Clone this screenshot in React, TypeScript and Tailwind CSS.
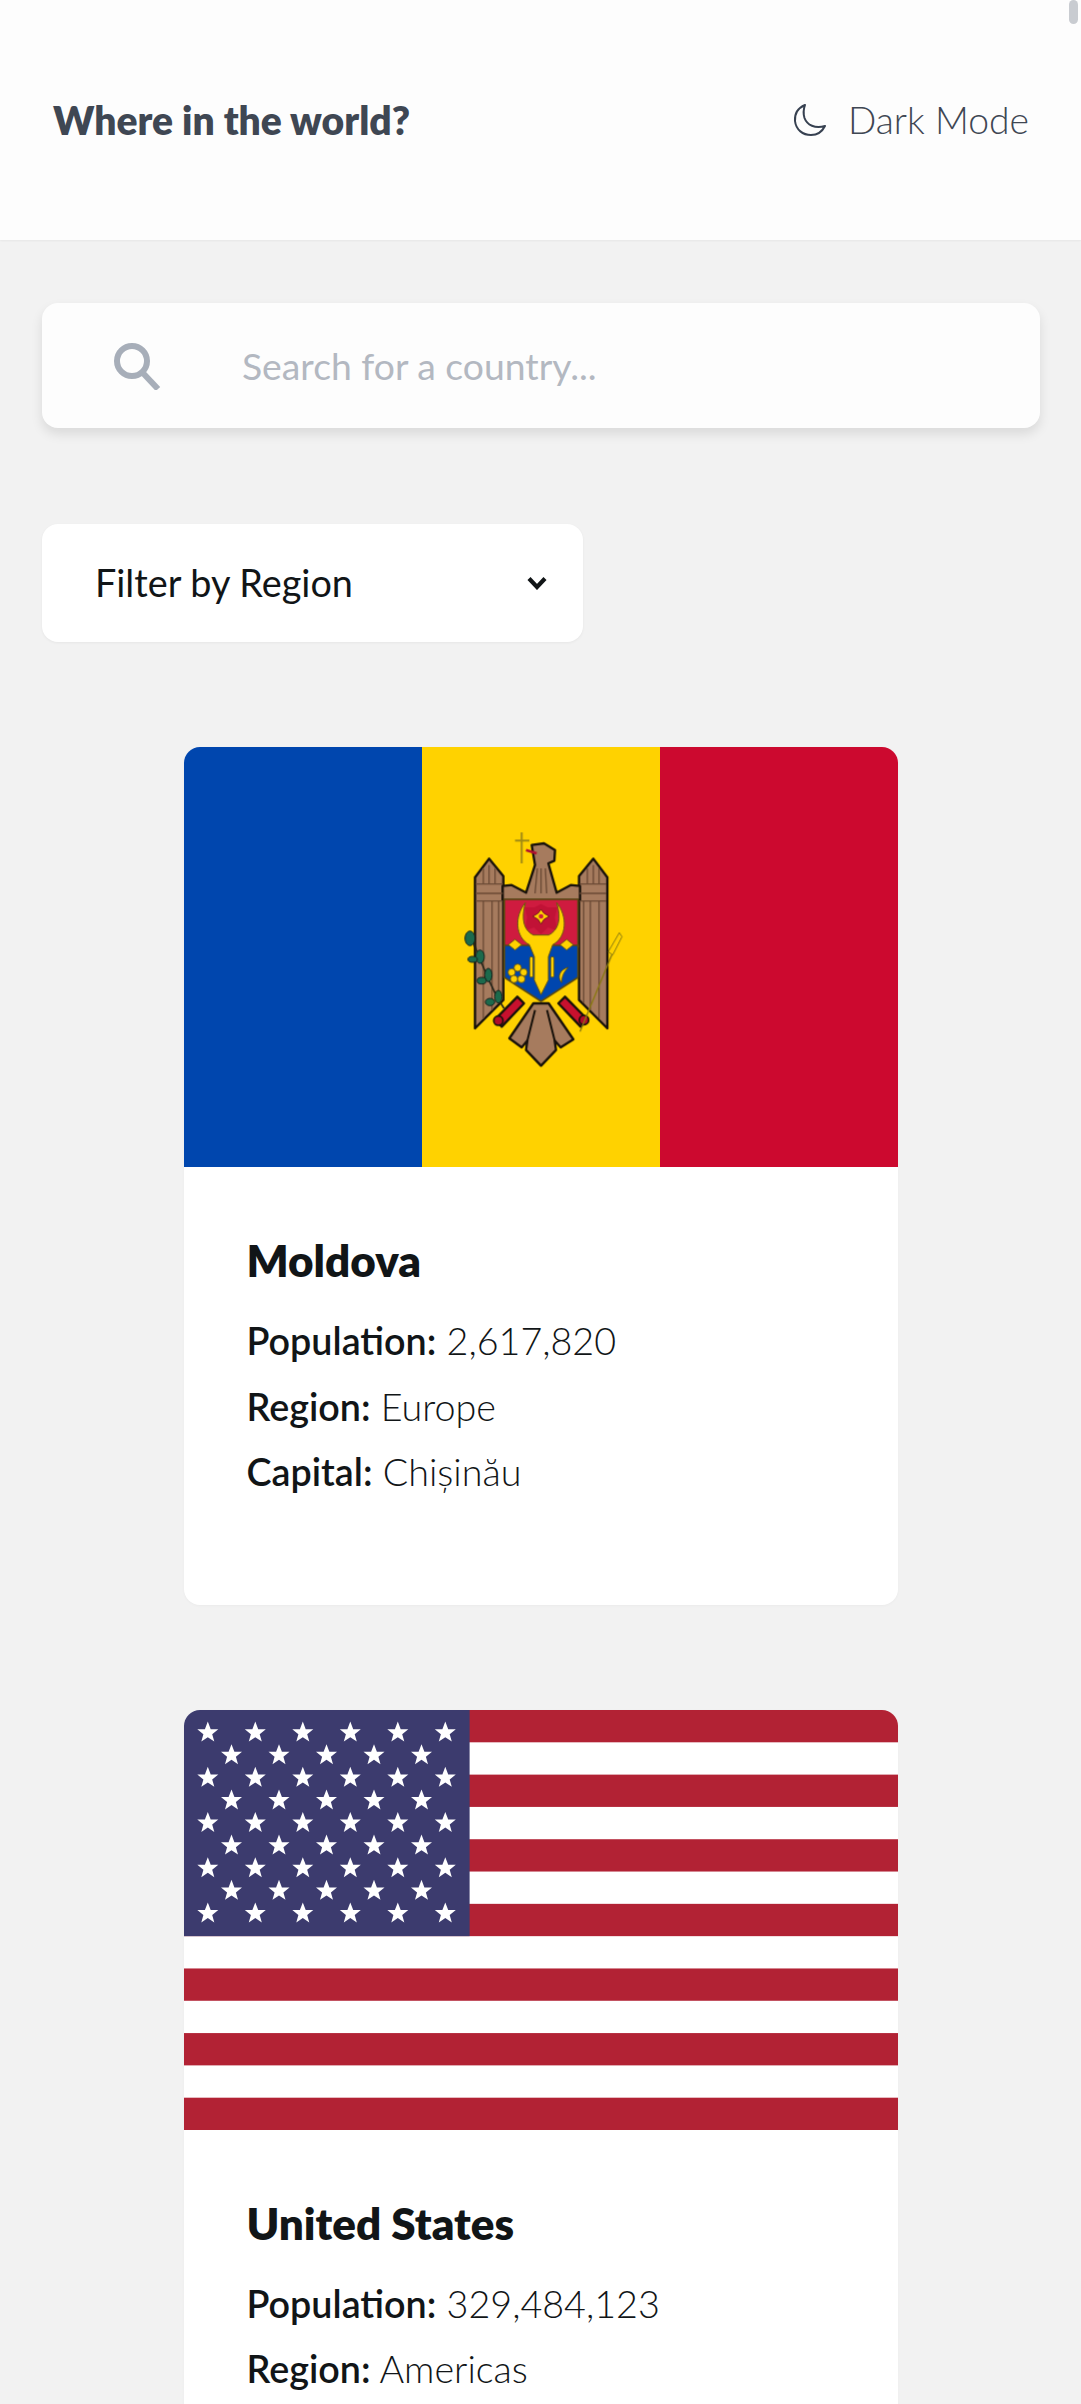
const font = "font-['Lato','Open_Sans',sans-serif]";

function Moon() {
  return (
    <svg viewBox="0 0 34 34" className="w-[34px] h-[34px]" fill="none" stroke="#374151" strokeWidth="2" strokeLinejoin="round">
      <path d="M12 2 C5 5 1.5 11 2 18 C3 27 10 32 18 32 C24 32 29 29 32 23 C22 26 14 22 11.5 15 C10 10 10.5 6 12 2 Z" />
    </svg>
  );
}

function SearchIcon() {
  return (
    <svg viewBox="0 0 48 48" className="w-[48px] h-[48px]" fill="none" stroke="#a7aeb9">
      <circle cx="19" cy="19" r="15" strokeWidth="6" />
      <path d="M29 30 L45 47" strokeWidth="6" />
    </svg>
  );
}

function Chevron() {
  return (
    <svg viewBox="0 0 20 14" className="w-[20px] h-[14px]" fill="none" stroke="#111517" strokeWidth="4.2">
      <path d="M2 2.5 L10 11 L18 2.5" />
    </svg>
  );
}

function MoldovaFlag() {
  const wing = "M165 685 L165 232 L207 176 L250 228 L250 300 L250 600 Z";
  const wingLines = "M190 305 L190 655 M216 305 L216 630 M236 305 L236 610 M168 252 L248 252 M168 280 L248 280 M168 303 L248 303 M190 205 L190 250 M207 195 L207 250 M225 205 L225 250";
  const tail = "M340 610 L268 715 L305 742 L322 722 L318 750 L363 797 L408 750 L404 722 L422 742 L460 718 L386 610 Z";
  return (
    <svg viewBox="0 0 714 420" className="block w-full h-[420px]" preserveAspectRatio="none">
      <rect width="238" height="420" fill="#0046AE" />
      <rect x="238" width="238" height="420" fill="#FFD200" />
      <rect x="476" width="238" height="420" fill="#CC092F" />
      <g transform="translate(236 53) scale(0.33333)" className="blur-[0.6px]">
        <g stroke="#17110a" strokeWidth="7" strokeLinejoin="round">
          <path d={wing} fill="#A67B5E" />
          <path d={wing} fill="#A67B5E" transform="translate(727 0) scale(-1 1)" />
          <path d="M248 258 L275 255 L318 278 L345 195 L335 135 L372 130 L405 150 L403 182 L385 190 L410 278 L452 255 L480 258 L480 300 L248 300 Z" fill="#A67B5E" />
          <path d={tail} fill="#A67B5E" />
          <path d="M225 658 L292 590 L312 610 L245 680 Z" fill="#C8102E" />
          <path d="M502 658 L435 590 L415 610 L482 680 Z" fill="#C8102E" />
        </g>
        <circle cx="235" cy="662" r="14" fill="#B00C2A" stroke="#17110a" strokeWidth="5" />
        <circle cx="492" cy="660" r="14" fill="#B00C2A" stroke="#17110a" strokeWidth="5" />
        <g stroke="#6b4a35" strokeWidth="4" fill="none">
          <path d={wingLines} />
          <path d={wingLines} transform="translate(727 0) scale(-1 1)" />
          <path d="M345 280 L352 205 M363 280 L363 205 M380 280 L376 205" />
        </g>
        <path d="M345 630 L322 722 M381 630 L404 722" stroke="#17110a" strokeWidth="6" fill="none" />
        <path d="M253 298 L474 298 L474 440 L253 440 Z" fill="#CF1B3F" stroke="#5a4a12" strokeWidth="5" />
        <path d="M253 436 L474 436 L474 532 L363 604 L253 532 Z" fill="#0046AE" stroke="#5a4a12" strokeWidth="5" />
        <path d="M363 312 L382 322 L412 322 L404 352 L412 392 L384 382 L363 402 L342 382 L314 392 L322 352 L314 322 L344 322 Z" fill="#C11236" />
        <path d="M363 328 L372 340 L388 349 L372 358 L363 372 L354 358 L338 349 L354 340 Z" fill="#FFD200" stroke="#7a1020" strokeWidth="3" />
        <circle cx="363" cy="349" r="7" fill="#CF1B3F" />
        <path d="M316 308 C282 350 286 412 328 434 L343 470 L343 540 L363 584 L385 540 L385 470 L398 434 C440 412 444 350 410 308 C426 358 414 392 386 405 L340 405 C312 392 302 358 316 308 Z" fill="#FFD200" stroke="#6a5510" strokeWidth="3" />
        <g fill="#FFD200" stroke="#5a4a12" strokeWidth="2.5">
          <circle cx="293" cy="503" r="11" />
          <circle cx="275" cy="517" r="11" />
          <circle cx="311" cy="517" r="11" />
          <circle cx="282" cy="537" r="11" />
          <circle cx="304" cy="537" r="11" />
          <path d="M285 418 L305 434 L285 450 L265 434 Z" />
          <path d="M440 418 L460 434 L440 450 L420 434 Z" />
          <path d="M445 502 C420 508 410 530 425 548 C425 528 432 515 445 502 Z" />
          <rect x="329" y="470" width="10" height="62" rx="5" />
          <rect x="392" y="470" width="10" height="62" rx="5" />
        </g>
        <path d="M252 625 C215 570 190 500 148 400" fill="none" stroke="#24241a" strokeWidth="5" />
        <g fill="#1c6a4c" stroke="#14201a" strokeWidth="3">
          <ellipse cx="150" cy="415" rx="15" ry="22" />
          <ellipse cx="180" cy="470" rx="13" ry="20" />
          <ellipse cx="158" cy="478" rx="14" ry="9" />
          <ellipse cx="205" cy="525" rx="11" ry="20" />
          <ellipse cx="185" cy="542" rx="14" ry="10" />
          <ellipse cx="235" cy="590" rx="11" ry="19" />
          <ellipse cx="210" cy="606" rx="14" ry="11" />
        </g>
        <path d="M480 695 L600 405" fill="none" stroke="#8a7a10" strokeWidth="4" />
        <path d="M598 398 L606 410 L578 465 L565 455 Z" fill="#FFD200" stroke="#8a7a10" strokeWidth="3" />
        <path d="M305 97 L305 190 M285 122 L328 122" stroke="#a08a14" strokeWidth="6" fill="none" />
        <path d="M318 150 L350 160" stroke="#B01030" strokeWidth="8" />
      </g>
    </svg>
  );
}

function UsFlag() {
  const s = 420 / 13;
  const stars: [number, number][] = [];
  for (let r = 0; r < 9; r++) {
    const n = r % 2 === 0 ? 6 : 5;
    for (let c = 0; c < n; c++) {
      stars.push([(r % 2 === 0 ? 23.8 : 47.5) + c * 47.5, 22.6 + r * 22.6]);
    }
  }
  const star = "M0 -11 L2.9 -3.4 L10.5 -3.4 L4.4 1.6 L6.5 9 L0 4.6 L-6.5 9 L-4.4 1.6 L-10.5 -3.4 L-2.9 -3.4 Z";
  return (
    <svg viewBox="0 0 714 420" className="block w-full h-[420px]" preserveAspectRatio="none">
      <rect width="714" height="420" fill="#fff" />
      <g className="blur-[0.5px]">
        {Array.from({ length: 7 }, (_, i) => (
          <rect key={i} x="-10" y={i * 2 * s} width="734" height={i === 6 ? s + 10 : s} fill="#B22234" />
        ))}
        <rect x="-10" y="-10" width="295.6" height={7 * s + 10} fill="#3C3B6E" />
      </g>
      <g className="blur-[0.7px]">
        {stars.map(([x, y], i) => (
          <path key={i} d={star} transform={`translate(${x} ${y})`} fill="#fff" />
        ))}
      </g>
    </svg>
  );
}

function Line({ k, v }: { k: string; v: string }) {
  return (
    <p className="text-[37.7px] leading-[65.5px] text-[#111517] font-light">
      <span className="font-semibold">{k}:</span> {v}
    </p>
  );
}

function Card({ flag, name, pop, region, capital }: { flag: React.ReactNode; name: string; pop: string; region: string; capital?: string }) {
  return (
    <article className="w-[714px] mx-auto bg-white rounded-2xl overflow-hidden shadow-[0_1px_3px_rgba(0,0,0,0.03)]">
      {flag}
      <div className="pt-[60px] pb-[100px] px-[63px]">
        <h2 className="text-[44px] leading-[66px] font-extrabold text-[#111517] mb-[15px]">{name}</h2>
        <Line k="Population" v={pop} />
        <Line k="Region" v={region} />
        {capital ? <Line k="Capital" v={capital} /> : null}
      </div>
    </article>
  );
}

export default function App() {
  return (
    <div className={`${font} relative h-[2404px] overflow-hidden bg-[#f2f2f2]`}>
      <div className="absolute top-0 right-[3px] w-[9px] h-[24px] rounded-full bg-[#c9ccd1]" />
      <header className="h-[240px] bg-[#fdfdfd] shadow-[0_1px_2px_rgba(0,0,0,0.05)] flex items-center justify-between pl-[53px] pr-[52px]">
        <h1 className="text-[39px] font-extrabold text-[#3f4753]">Where in the world?</h1>
        <div className="flex items-center gap-[21px]">
          <Moon />
          <span className="text-[37.3px] font-light text-[#3f4753]">Dark Mode</span>
        </div>
      </header>
      <main className="pl-[42px] pr-[41px] pt-[63px]">
        <div className="h-[125px] bg-[#fdfdfd] rounded-2xl shadow-[0_6px_12px_rgba(0,0,0,0.1)] flex items-center pl-[71px]">
          <SearchIcon />
          <input
            readOnly
            placeholder="Search for a country..."
            className="ml-[81px] flex-1 bg-transparent outline-none text-[37.3px] font-normal placeholder:text-[#b3b8c1]"
          />
        </div>
        <div className="mt-[96px] w-[541px] h-[118px] bg-white rounded-2xl shadow-[0_1px_3px_rgba(0,0,0,0.05)] flex items-center justify-between pl-[53px] pr-[36px]">
          <span className="text-[37.8px] leading-[44px] font-normal text-[#111517]">Filter by Region</span>
          <Chevron />
        </div>
        <div className="mt-[105px] flex flex-col gap-[105px] -ml-[1px]">
          <Card flag={<MoldovaFlag />} name="Moldova" pop="2,617,820" region="Europe" capital="Chișinău" />
          <Card flag={<UsFlag />} name="United States" pop="329,484,123" region="Americas" />
        </div>
      </main>
    </div>
  );
}
